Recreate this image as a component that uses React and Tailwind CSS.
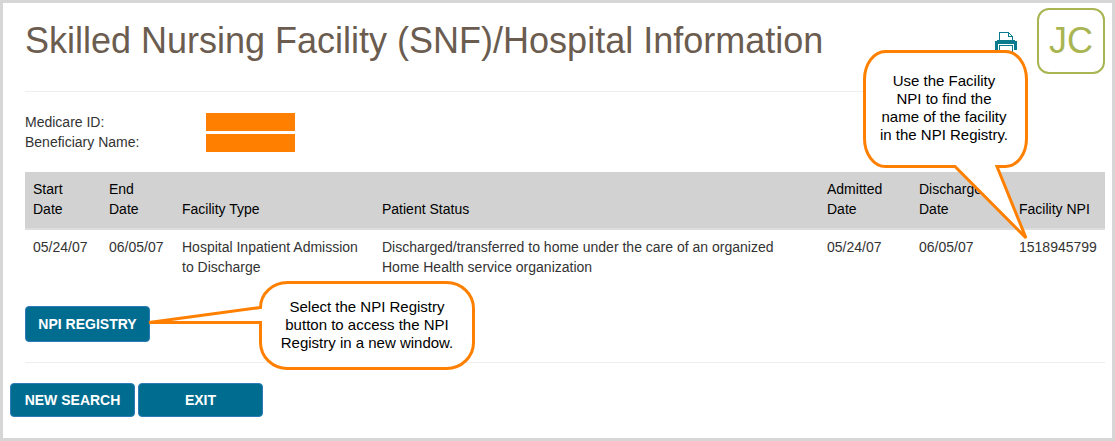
import React from "react";

const COLUMNS = [
  { key: "start", label: ["Start", "Date"], width: "w-[76px]" },
  { key: "end", label: ["End", "Date"], width: "w-[73px]" },
  { key: "type", label: ["Facility Type"], width: "w-[200px]" },
  { key: "status", label: ["Patient Status"], width: "" },
  { key: "admitted", label: ["Admitted", "Date"], width: "w-[92px]" },
  { key: "discharged", label: ["Discharge", "Date"], width: "w-[100px]" },
  { key: "npi", label: ["Facility NPI"], width: "w-[94px]" },
];

const STAYS = [
  {
    start: "05/24/07",
    end: "06/05/07",
    type: "Hospital Inpatient Admission to Discharge",
    status:
      "Discharged/transferred to home under the care of an organized Home Health service organization",
    admitted: "05/24/07",
    discharged: "06/05/07",
    npi: "1518945799",
  },
];

function PrinterIcon() {
  return (
    <svg
      className="h-6 w-[22px]"
      viewBox="0 0 22 24"
      fill="none"
      stroke="#0b7a8c"
      shapeRendering="crispEdges"
      aria-hidden="true"
    >
      <path d="M4.5 8V0.5H13.5L17.5 4.500V8" />
      <path d="M13.5 0.5V4.5H17.5" />
      <path d="M1 9H2V8H20V9H22V18H19V12H3V18H0V9Z" fill="#0b7a8c" stroke="none" />
      <path d="M4.500 22.5V13.5H17.5V22.5Z" />
    </svg>
  );
}

function ActionButton({ children, className = "" }) {
  return (
    <button
      type="button"
      className={`w-[125px] rounded border border-[#2e7bb8] bg-[#006d90] text-sm font-bold text-white hover:bg-[#005a78] ${className}`}
    >
      {children}
    </button>
  );
}

// Speech bubble: the outline is drawn in an svg and the text sits on top
function Callout({ className, textClassName, viewBox, outline, children }) {
  return (
    <div className={`pointer-events-none absolute ${className}`}>
      <svg className="absolute inset-0 h-full w-full" viewBox={viewBox} aria-hidden="true">
        <path d={outline} fill="#fff" stroke="#ff8000" strokeWidth="3" />
      </svg>
      <p className={`relative text-center text-[15px] leading-[18px] text-black ${textClassName}`}>
        {children}
      </p>
    </div>
  );
}

export default function App() {
  return (
    <main className="relative min-h-screen border-[3px] border-[#d6d6d6] bg-white pr-[7px] pl-[22px] font-['Liberation_Sans',Arial,sans-serif] text-sm text-[#333]">
      <header className="flex items-start">
        <h1 className="h-[89px] flex-1 border-b border-[#eee] pt-4 text-4xl leading-[44px] text-[#6b5c50]">
          Skilled Nursing Facility (SNF)/Hospital Information
        </h1>
        <button type="button" aria-label="Print" className="mt-[29px] mr-5 ml-3">
          <PrinterIcon />
        </button>
        <div className="mt-[5px] flex h-[66px] w-[68px] items-center justify-center rounded-xl border-2 border-[#a9b553] text-4xl text-[#a9b553]">
          JC
        </div>
      </header>

      <dl className="mt-5 grid grid-cols-[181px_89px] leading-5">
        <dt>Medicare ID:</dt>
        <dd className="flex items-center">
          <span className="h-[18px] w-full bg-[#ff8000]" />
        </dd>
        <dt>Beneficiary Name:</dt>
        <dd className="flex items-end">
          <span className="h-[18px] w-full bg-[#ff8000]" />
        </dd>
      </dl>

      <table className="mt-5 w-full table-fixed text-left leading-5">
        <thead>
          <tr className="border-b-2 border-[#ddd] bg-[#d2d2d2] text-black">
            {COLUMNS.map(({ key, label, width }) => (
              <th
                key={key}
                scope="col"
                className={`px-2 pt-[7px] pb-[9px] align-bottom font-normal ${width}`}
              >
                {label.map((line) => (
                  <span key={line} className="block">
                    {line}
                  </span>
                ))}
              </th>
            ))}
          </tr>
        </thead>
        <tbody>
          {STAYS.map((stay) => (
            <tr key={stay.npi}>
              {COLUMNS.map(({ key }) => (
                <td key={key} className="px-2 pt-[7px] pb-[9px] align-top">
                  {stay[key]}
                </td>
              ))}
            </tr>
          ))}
        </tbody>
      </table>

      <div className="relative mt-5 border-b border-[#eee] pb-5">
        <ActionButton className="h-9">NPI REGISTRY</ActionButton>
        <Callout
          className="-top-[26px] left-[122px] h-[92px] w-[330px]"
          textClassName="pt-[18px] pr-1 pl-[114px]"
          viewBox="0 0 330 92"
          outline="M140.5 2.5H299.5A27 26 0 0 1 326.5 28.5V62.5A27 26 0 0 1 299.5 88.5H140.5A27 26 0 0 1 113.5 62.5V42.5H2L113.5 27.5A27 25 0 0 1 140.5 2.5Z"
        >
          Select the NPI Registry
          <br />
          button to access the NPI
          <br />
          Registry in a new window.
        </Callout>
      </div>

      <div className="mt-5 -ml-[15px] flex gap-[3px] pb-5">
        <ActionButton className="h-[34px]">NEW SEARCH</ActionButton>
        <ActionButton className="h-[34px]">EXIT</ActionButton>
      </div>

      <Callout
        className="top-[47px] right-[83px] h-[192px] w-[166px]"
        textClassName="pt-[22px] pr-1"
        viewBox="0 0 166 192"
        outline="M22.5 1.5H142.5A21 28 0 0 1 163.5 29.5V88.5A21 28 0 0 1 142.5 116.5H134L163 188L92 116.5H22.5A21 28 0 0 1 1.5 88.5V29.5A21 28 0 0 1 22.5 1.5Z"
      >
        Use the Facility
        <br />
        NPI to find the
        <br />
        name of the facility
        <br />
        in the NPI Registry.
      </Callout>
    </main>
  );
}
